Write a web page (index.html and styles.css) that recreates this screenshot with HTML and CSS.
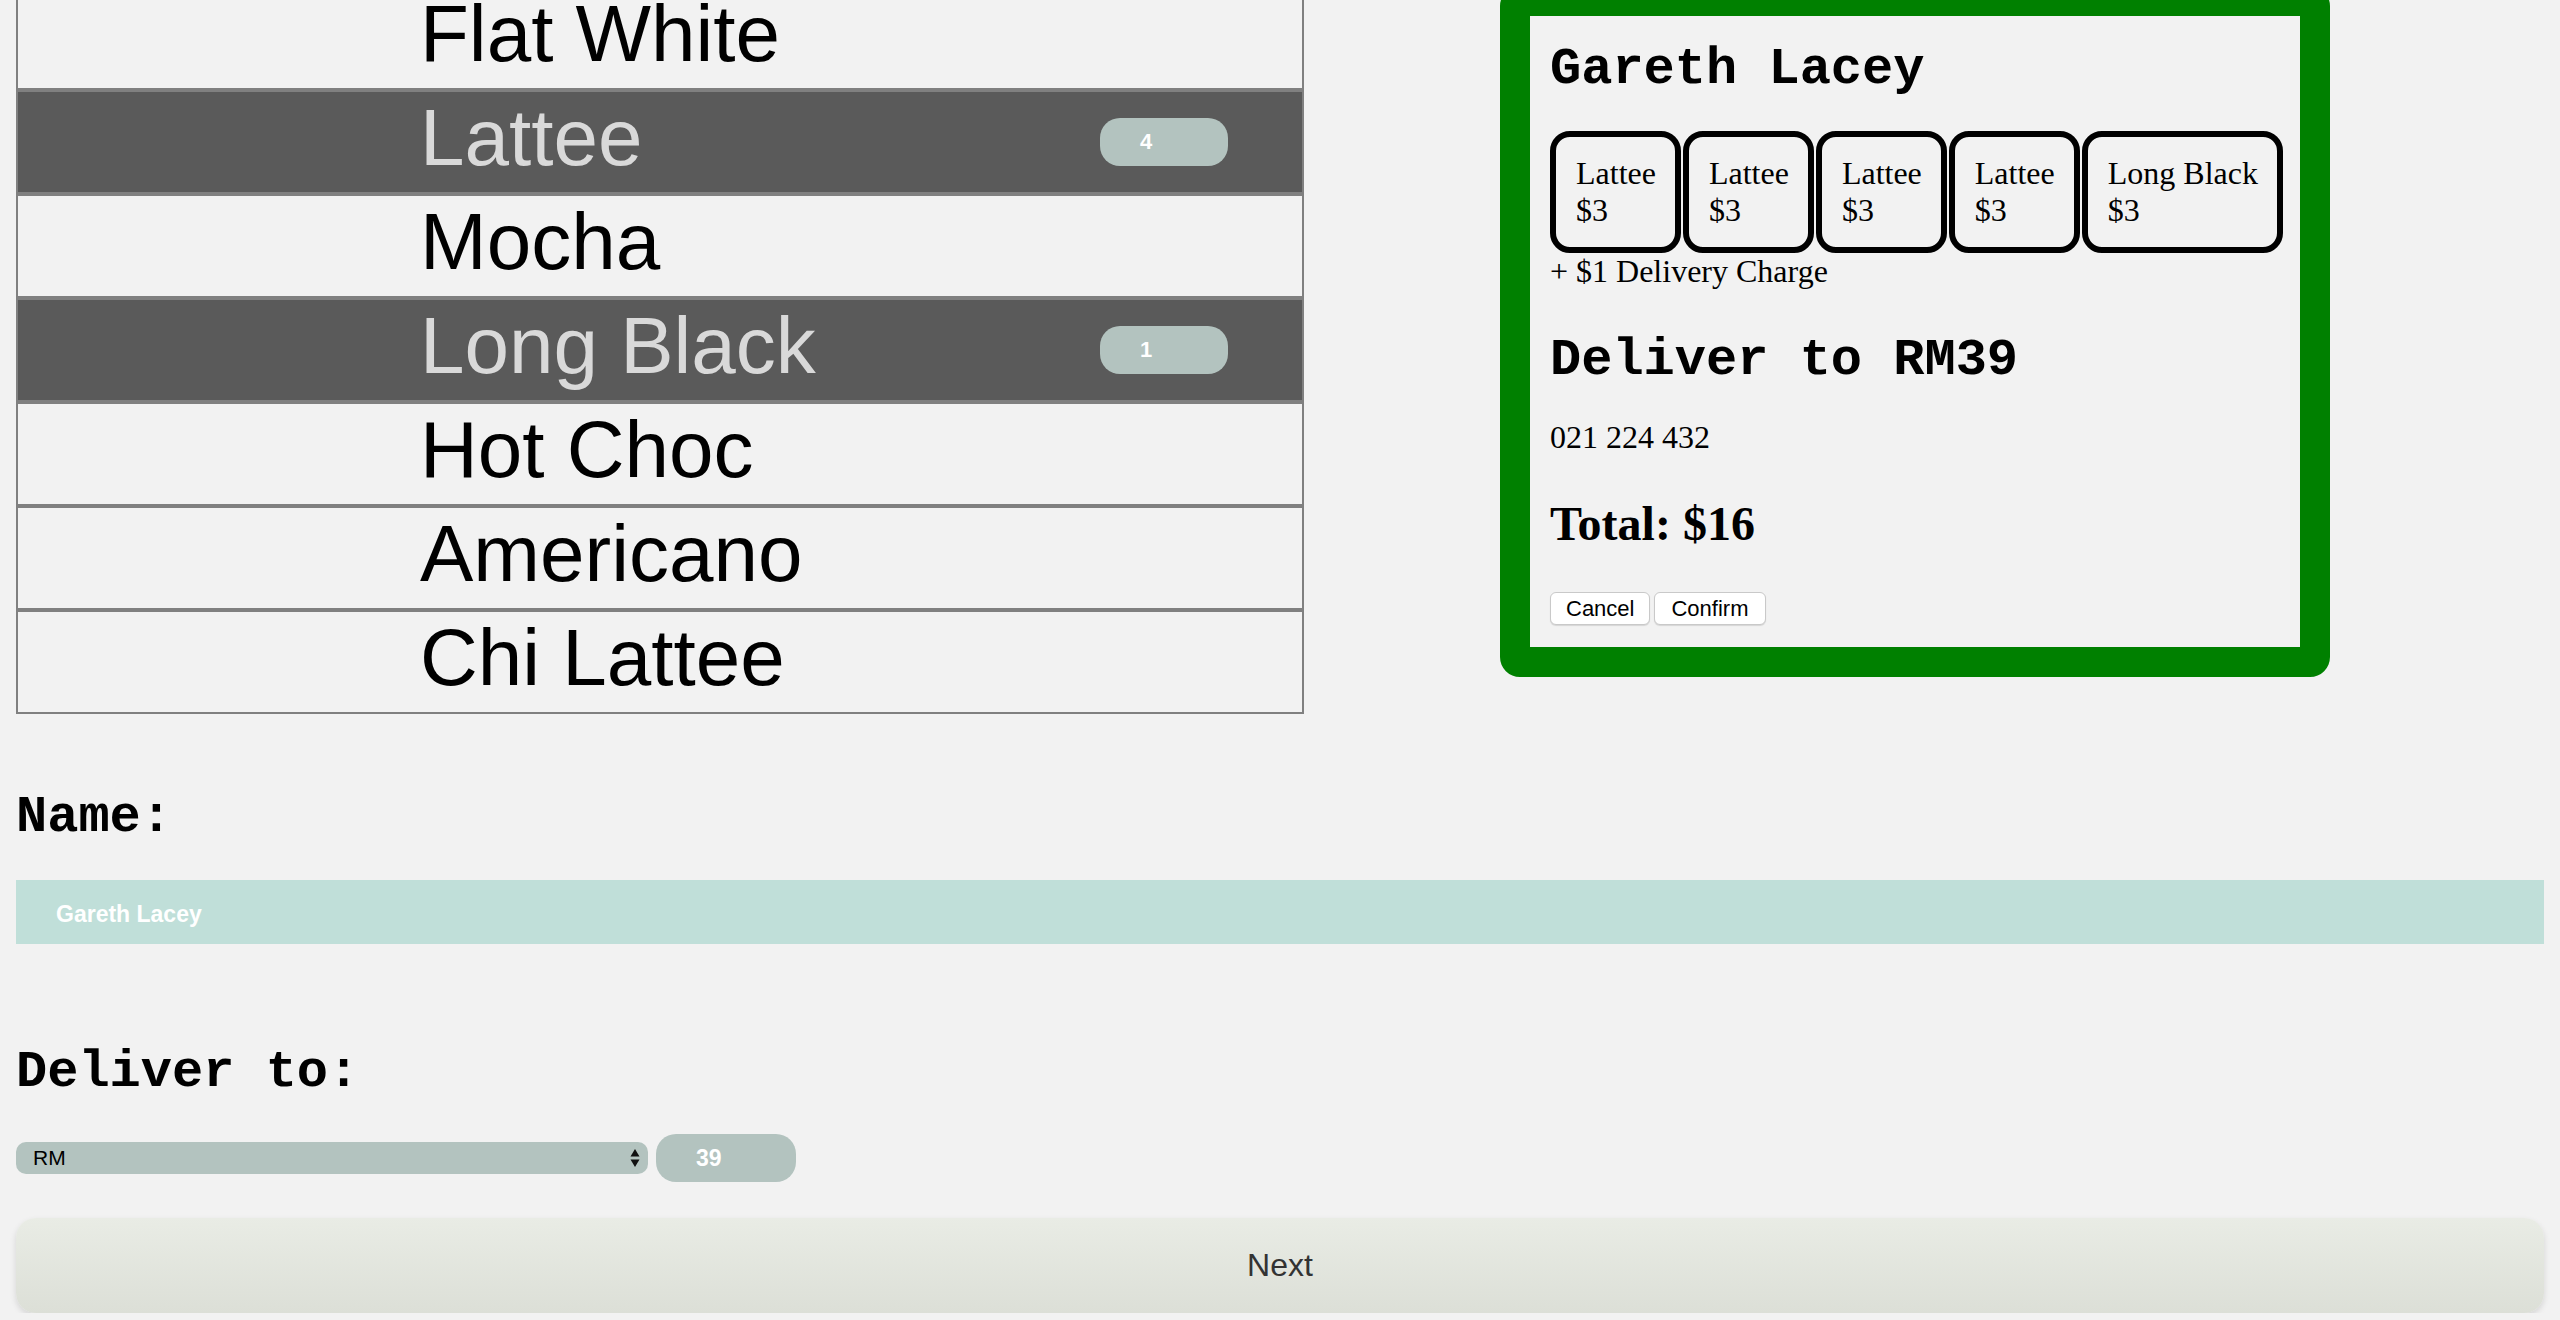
FILE: index.html
```html
<!DOCTYPE html>
<html>
<head>
<meta charset="utf-8">
<title>Coffee Order</title>
<link rel="stylesheet" href="styles.css">
</head>
<body>
<div class="page">
  <div class="top">
    <div class="list">
      <div class="row"><span class="item-name">Flat White</span></div>
      <div class="row sel"><span class="item-name">Lattee</span><span class="badge">4</span></div>
      <div class="row"><span class="item-name">Mocha</span></div>
      <div class="row sel"><span class="item-name">Long Black</span><span class="badge">1</span></div>
      <div class="row"><span class="item-name">Hot Choc</span></div>
      <div class="row"><span class="item-name">Americano</span></div>
      <div class="row"><span class="item-name">Chi Lattee</span></div>
    </div>
    <div class="panel">
      <div class="ph">Gareth Lacey</div>
      <div class="cards">
        <div class="card">Lattee<br>$3</div>
        <div class="card">Lattee<br>$3</div>
        <div class="card">Lattee<br>$3</div>
        <div class="card">Lattee<br>$3</div>
        <div class="card">Long Black<br>$3</div>
      </div>
      <div class="delivery">+ $1 Delivery Charge</div>
      <div class="ph ph2">Deliver to RM39</div>
      <div class="phone">021 224 432</div>
      <div class="total">Total: $16</div>
      <div class="btns">
        <button class="btn">Cancel</button>
        <button class="btn">Confirm</button>
      </div>
    </div>
  </div>
  <div class="label">Name:</div>
  <div class="name-input">Gareth Lacey</div>
  <div class="label label2">Deliver to:</div>
  <div class="selrow">
    <div class="select"><span>RM</span>
      <svg class="arrows" width="10" height="20" viewBox="0 0 10 20"><path d="M5 1 L9.5 8.5 L0.5 8.5 Z" fill="#111"/><path d="M5 19 L9.5 11.5 L0.5 11.5 Z" fill="#111"/></svg>
    </div>
    <div class="num">39</div>
  </div>
  <div class="next">Next</div>
</div>
</body>
</html>
```
FILE: styles.css
```css
html, body {
  margin: 0;
  padding: 0;
  background: #f2f2f2;
}
body {
  font-family: "Liberation Serif", "Times New Roman", serif;
  overflow: hidden;
}
.page {
  padding: 0 16px;
}
.top {
  display: flex;
  align-items: flex-start;
  gap: 196px;
  margin-top: -14px;
}
.list {
  width: 1288px;
  flex-shrink: 0;
}
.row {
  display: flex;
  align-items: center;
  height: 100px;
  border: 2px solid #808080;
  padding-left: 402px;
  font-family: "Liberation Sans", Arial, sans-serif;
  font-size: 80px;
  color: #000;
  background: #f2f2f2;
}
.row.sel {
  background: #5a5a5a;
  color: #d9d9d9;
}
.item-name {
  align-self: flex-start;
  line-height: 92px;
}
.badge {
  margin-left: auto;
  margin-right: 74px;
  width: 128px;
  height: 48px;
  box-sizing: border-box;
  padding-left: 40px;
  border-radius: 20px;
  background: #b3c3bf;
  color: #fff;
  font-size: 22px;
  font-weight: bold;
  line-height: 48px;
}
.panel {
  width: 830px;
  box-sizing: border-box;
  border: 30px solid #008000;
  border-radius: 20px;
  background: #f2f2f2;
  padding: 24px 20px 22px;
}
.ph {
  font-family: "Liberation Mono", "Courier New", monospace;
  font-weight: bold;
  font-size: 52px;
  line-height: 60px;
  color: #000;
}
.cards {
  display: flex;
  gap: 2px;
  margin-top: 31px;
}
.card {
  flex-shrink: 0;
  border: 6px solid #000;
  border-radius: 20px;
  padding: 18px 19px 18px 20px;
  font-size: 32px;
  line-height: 37px;
  white-space: nowrap;
}
.delivery {
  font-size: 32px;
  line-height: 37px;
}
.ph2 {
  margin-top: 41px;
}
.phone {
  margin-top: 28px;
  font-size: 32px;
  line-height: 37px;
}
.total {
  margin-top: 40px;
  font-size: 48px;
  font-weight: bold;
  line-height: 56px;
}
.btns {
  display: flex;
  gap: 4px;
  margin-top: 40px;
}
.btn {
  height: 33px;
  padding: 0 15px;
  background: #fff;
  border: 1px solid #c9c9c9;
  border-radius: 6px;
  box-shadow: 0 1px 1px rgba(0,0,0,0.12);
  font-family: "Liberation Sans", Arial, sans-serif;
  font-size: 22px;
  color: #000;
}
.btn + .btn {
  padding: 0 16px;
}
.label {
  margin-top: 74px;
  font-family: "Liberation Mono", "Courier New", monospace;
  font-weight: bold;
  font-size: 52px;
  line-height: 60px;
}
.name-input {
  margin-top: 32px;
  height: 64px;
  box-sizing: border-box;
  background: #c0dfd9;
  padding: 2px 0 0 40px;
  font-family: "Liberation Sans", Arial, sans-serif;
  font-weight: bold;
  font-size: 23px;
  line-height: 64px;
  color: #fff;
}
.label2 {
  margin-top: 99px;
}
.selrow {
  display: flex;
  align-items: center;
  gap: 8px;
  margin-top: 31px;
}
.select {
  width: 632px;
  height: 32px;
  box-sizing: border-box;
  display: flex;
  align-items: center;
  justify-content: space-between;
  padding: 0 8px 0 17px;
  border-radius: 10px;
  background: #b3c3bf;
  font-family: "Liberation Sans", Arial, sans-serif;
  font-size: 21px;
  color: #000;
}
.num {
  width: 140px;
  height: 48px;
  box-sizing: border-box;
  padding-left: 40px;
  border-radius: 20px;
  background: #b3c3bf;
  font-family: "Liberation Sans", Arial, sans-serif;
  font-weight: bold;
  font-size: 23px;
  line-height: 48px;
  color: #fff;
}
.next {
  margin-top: 36px;
  height: 95px;
  border-radius: 20px;
  background: linear-gradient(#e9ece5, #dcdfd7);
  box-shadow: 0 3px 6px rgba(0,0,0,0.12);
  display: flex;
  align-items: center;
  justify-content: center;
  font-family: "Liberation Sans", Arial, sans-serif;
  font-size: 32px;
  color: #333;
}
```
